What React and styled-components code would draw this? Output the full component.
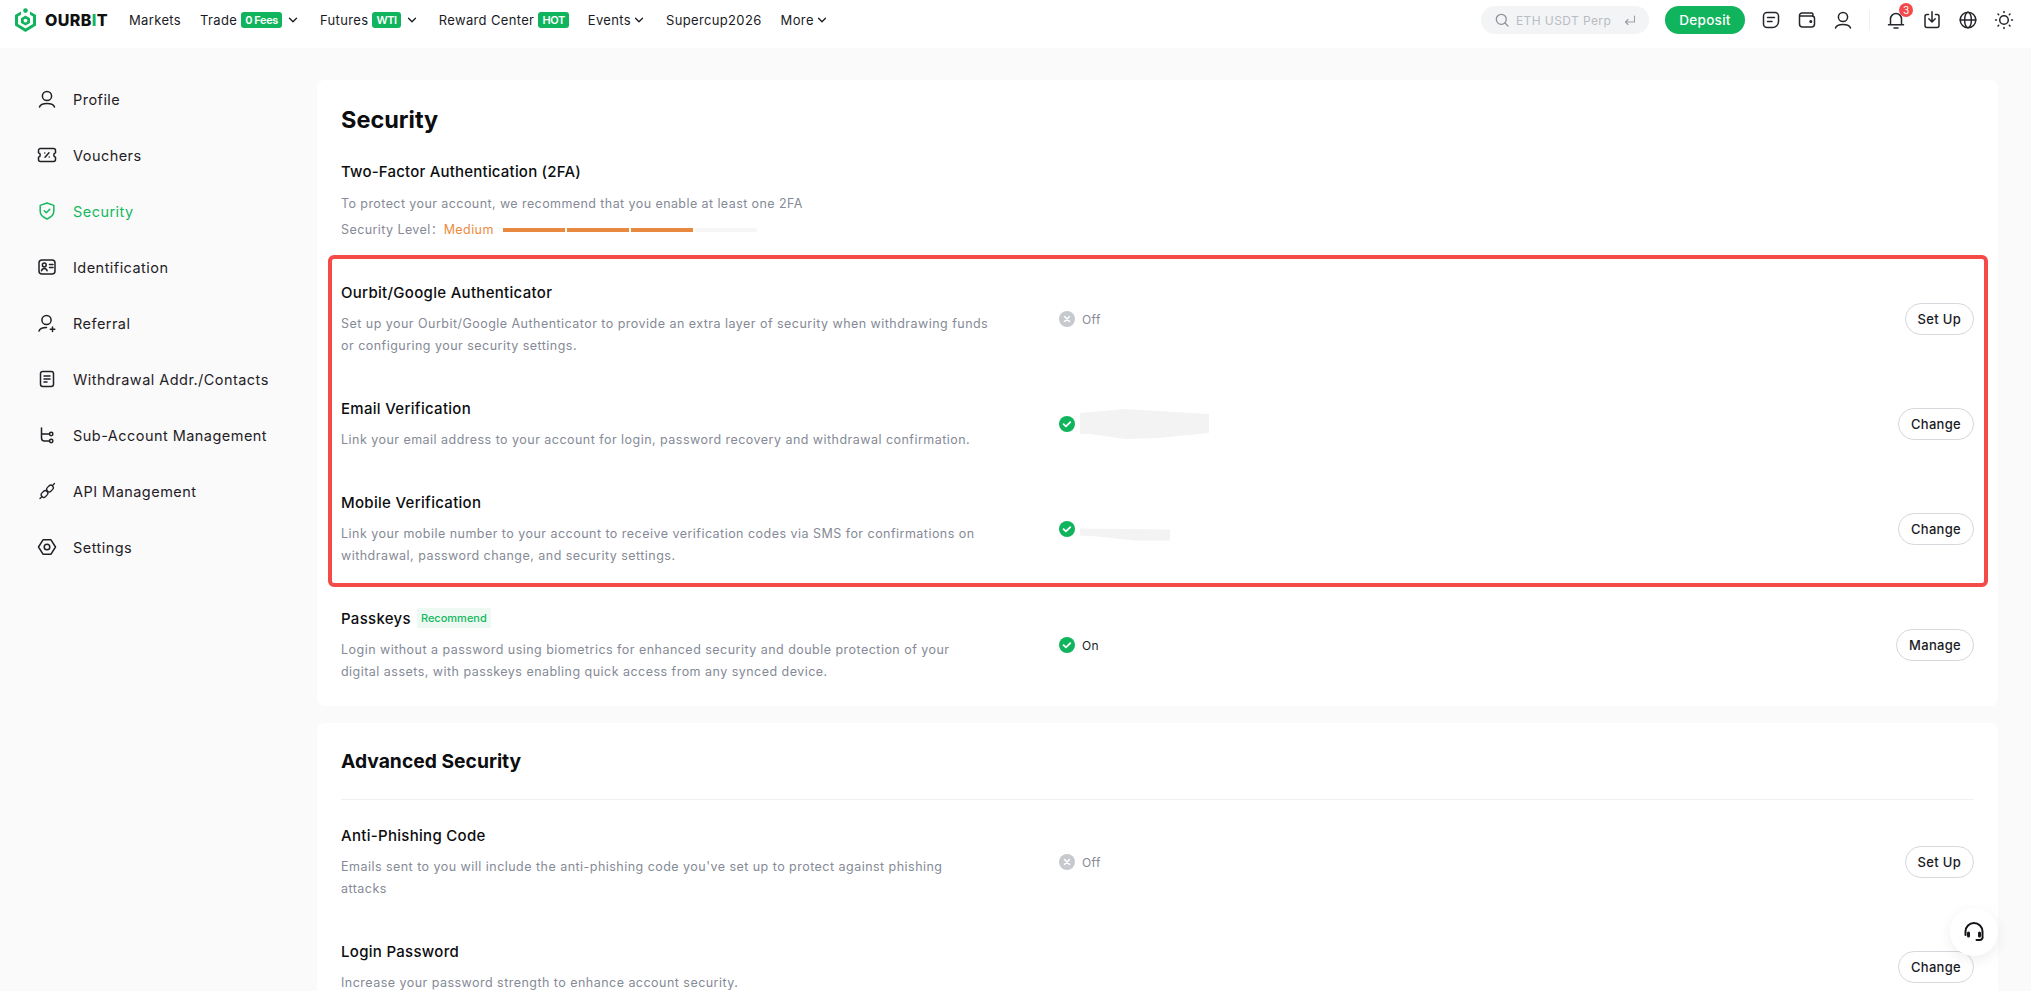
import React from 'react';
import styled, { createGlobalStyle } from 'styled-components';

const FONT = 'Inter, "Noto Sans CJK SC", "Liberation Sans", sans-serif';

const Global = createGlobalStyle`
  html, body { margin: 0; padding: 0; height: 100%; overflow: hidden; background: #fafafa; }
  body { font-family: ${FONT}; color: #1a1b1f; -webkit-font-smoothing: antialiased; }
  * { box-sizing: border-box; }
`;

const GREEN = '#10b45c';

const Page = styled.div`height: 991px; overflow: hidden; display: flex; flex-direction: column;`;
const Header = styled.header`height: 48px; flex: none; background: #fff; display: flex; align-items: center; padding: 0 9px 8px 15px;`;
const Logo = styled.div`display: flex; align-items: center; gap: 9px; width: 114px; flex: none;`;
const LogoWord = styled.span`font-size: 16px; font-weight: 800; letter-spacing: 0.4px; color: #111; em { font-style: normal; color: ${GREEN}; }`;
const Nav = styled.nav`display: flex; align-items: center; gap: 19px; font-size: 13px; letter-spacing: 0.35px; color: #1a1b1f;`;
const NavItem = styled.a`display: flex; align-items: center; white-space: nowrap;`;
const Tag = styled.span`height: 16px; margin-left: 4px; padding: 0 4px; border-radius: 3px; background: ${GREEN}; color: #fff; font-size: 11px; font-weight: 600; line-height: 16px; letter-spacing: -0.4px; & + svg { margin-left: 3px; }`;
const Right = styled.div`margin-left: auto; display: flex; align-items: center;`;
const Search = styled.div`width: 168px; height: 28px; border-radius: 14px; background: #f3f4f5; display: flex; align-items: center; padding: 0 13px 0 14px; gap: 7px; color: #b8bcc4; font-size: 12px; letter-spacing: 0.4px; margin-right: 16px; white-space: nowrap; svg:last-child { margin-left: auto; }`;
const Deposit = styled.button`width: 80px; height: 28px; border: 0; border-radius: 14px; background: ${GREEN}; color: #fff; font: 500 13.5px ${FONT}; letter-spacing: 0.3px; margin-right: 8px; padding: 0;`;
const IconSlot = styled.span`width: 36px; height: 20px; display: flex; justify-content: center; align-items: center; position: relative; color: #24262b;`;
const Divider = styled.span`width: 1px; height: 20px; background: #f0f0f0; margin: 0 8px;`;
const Dot = styled.span`position: absolute; top: -7px; left: 21px; width: 14px; height: 14px; border-radius: 50%; background: #f4484a; color: #fff; font-size: 10px; line-height: 14px; text-align: center;`;

const Body = styled.div`flex: 1; display: flex; min-height: 0;`;
const Sidebar = styled.aside`width: 317px; flex: none; padding: 23px 0 0 37px;`;
const SideItem = styled.a`height: 56px; display: flex; align-items: center; gap: 16px; font-size: 14.5px; letter-spacing: 0.46px; color: ${p => (p.$active ? '#14b85f' : '#1f2126')};`;
const Main = styled.main`flex: 1; padding: 32px 33px 0 0; display: flex; flex-direction: column; gap: 17px;`;
const Card = styled.section`background: #fff; border-radius: 8px; padding: 24px 24px 23px; flex: none;`;
const Title = styled.h1`margin: 1px 0 -1px; font-size: 23.5px; line-height: 30px; font-weight: 700; color: #0c0d0f;`;
const SectionTitle = styled.h2`margin: -1px 0 24px; padding-bottom: 23px; border-bottom: 1px solid #f1f1f1; font-size: 19.3px; line-height: 30px; font-weight: 700; color: #0c0d0f;`;
const SubTitle = styled.h2`margin: 27px 0 11px; font-size: 15px; line-height: 22px; font-weight: 500; letter-spacing: 0.2px; color: #0c0d0f;`;
const Hint = styled.div`font-size: 12.5px; line-height: 20px; color: #858a96; letter-spacing: 0.42px;`;
const Level = styled(Hint)`margin-top: 6px; display: flex; align-items: center;`;
const Medium = styled.span`color: #ee8a3f; margin-right: 9px;`;
const Bars = styled.div`display: flex; gap: 2px;`;
const Bar = styled.i`width: 62px; height: 4px; background: ${p => (p.$on ? '#e8893f' : '#f6f6f6')};`;
const Highlight = styled.div`margin: 15px -14px 20px -13px; padding: 22px 10px 16px 9px; border: 4px solid #f44a48; border-radius: 6px; display: flex; flex-direction: column; gap: 40px;`;
const Rows = styled.div`display: flex; flex-direction: column; gap: 40px;`;
const Row = styled.div`display: grid; grid-template-columns: 718px 1fr auto; align-items: center;`;
const RowTitle = styled.div`display: flex; align-items: center; gap: 6px; height: 22px; margin-bottom: 10px; font-size: 15px; font-weight: 500; letter-spacing: 0.3px; color: #0c0d0f;`;
const Desc = styled.div`font-size: 12.5px; line-height: 22px; color: #858a96; letter-spacing: 0.47px; max-width: 648px;`;
const Recommend = styled.span`height: 20px; line-height: 20px; padding: 0 4px; background: #edf9f2; color: #14b85f; font-size: 11px; font-weight: 500; letter-spacing: 0; border-radius: 2px;`;
const Status = styled.div`display: flex; align-items: center; gap: 7px; font-size: 12px; letter-spacing: 0.4px; color: ${p => (p.$on ? '#1a1b1f' : '#858a96')};`;
const Patch = styled.span`width: ${p => p.$w}px; height: ${p => p.$h}px; background: #f3f3f3; margin-left: -2px; clip-path: ${p => p.$clip};`;
const Btn = styled.button`height: 32px; padding: 0 12px; border: 1px solid #d5d8dc; border-radius: 16px; background: #fff; color: #1a1b1f; font: 500 13px ${FONT}; letter-spacing: 0.3px; white-space: nowrap;`;
const Float = styled.button`position: fixed; left: 1950px; top: 908px; width: 48px; height: 48px; border: 0; padding: 0; border-radius: 50%; background: #fff; box-shadow: 0 4px 14px rgba(0,0,0,.07); display: flex; align-items: center; justify-content: center; color: #15161a;`;

const S = ({ size = 20, w = 1.5, children }) => (
  <svg width={size} height={size} viewBox="0 0 20 20" fill="none" stroke="currentColor" strokeWidth={w} strokeLinecap="round" strokeLinejoin="round">{children}</svg>
);
const Chevron = () => (<svg width="16" height="10" viewBox="0 0 16 10" fill="none" stroke="#1a1b1f" strokeWidth="1.3" strokeLinecap="round" strokeLinejoin="round"><path d="M4.500 3.200 8 6.800l3.500-3.600" /></svg>);

const LogoMark = () => (
  <svg width="21" height="24" viewBox="0 0 21 24">
    <path d="M6 3.600 0 7v10.400L10.500 24 21 17.400V7l-6-3.400v3.200l3 1.800v7.400l-7.500 4.600L3 16V8.600l3-1.800z" fill={GREEN} />
    <path d="M10.500 7.600 15 10.200v4.800l-4.500 2.600L6 15v-4.800z" fill={GREEN} />
    <circle cx="10.500" cy="2.600" r="2.300" fill={GREEN} />
    <circle cx="10.500" cy="12.600" r="1.900" fill="#fff" />
  </svg>
);

const icons = {
  user: <S><circle cx="10" cy="7" r="4.600" /><path d="M2.500 18c.8-2.600 3.400-3.600 7.500-3.600s6.700 1 7.500 3.600" /></S>,
  voucher: <S><path d="M3.500 3.500h13a2 2 0 0 1 2 2v2.200a2.400 2.400 0 0 0 0 4.600v2.200a2 2 0 0 1-2 2h-13a2 2 0 0 1-2-2v-2.200a2.400 2.400 0 0 0 0-4.600V5.500a2 2 0 0 1 2-2z" /><path d="m12 7.800-4 4.400" /><path d="M7.800 8h.01M12.200 12h.01" /></S>,
  shield: <S><path d="M10 2 3.200 4.400v6.200c0 3.400 3 5.800 6.800 7.400 3.800-1.600 6.800-4 6.800-7.400V4.400z" /><path d="m7.200 9.800 2.100 2 3.500-3.600" /></S>,
  id: <S><rect x="2" y="3" width="16" height="14" rx="3" /><circle cx="7.300" cy="8" r="1.900" /><path d="M4.500 13.800c.4-1.500 1.400-2.200 2.800-2.200s2.400.7 2.800 2.200M12.500 7.500H16M12.500 10.500H16" /></S>,
  referral: <S><circle cx="9.500" cy="7" r="4.600" /><path d="M2 18c.8-2.600 3.300-3.600 7.500-3.600M15.500 14v4.500M13.300 16.300h4.500" /></S>,
  doc: <S><rect x="3.500" y="2.500" width="13" height="15" rx="2.200" /><path d="M7 7h6M7 10h6M7 13h3" /></S>,
  sub: <S><path d="M4.500 3v10a3 3 0 0 0 3 3h5M4.500 9h8" /><circle cx="14.200" cy="9" r="1.700" /><circle cx="14.200" cy="16" r="1.700" /></S>,
  api: <S w={1.3}><path d="m3 17.500 1.800-1.800M15.500 4.500l2-2" /><rect x="4" y="10.500" width="7" height="5" rx="2.200" transform="rotate(-45 7.500 13)" /><rect x="9.500" y="5" width="7" height="5" rx="2.200" transform="rotate(-45 13 7.500)" /></S>,
  settings: <S><path d="M6 2.800h8L18.500 10 14 17.200H6L1.500 10z" /><circle cx="10" cy="10" r="2.800" /></S>,
  note: <S><path d="M6 2.500h8a3.500 3.500 0 0 1 3.500 3.500v5.500a6 6 0 0 1-6 6H6A3.500 3.500 0 0 1 2.500 14V6A3.500 3.500 0 0 1 6 2.500z" /><path d="M6.500 7.500h7M6.500 11.500h4.500" /></S>,
  wallet: <S><path d="M16 6V4.500a1.500 1.500 0 0 0-1.500-1.500H5a2.500 2.500 0 0 0-2.500 2.500V14A3 3 0 0 0 5.500 17h9a3 3 0 0 0 3-3V8.500A2.500 2.500 0 0 0 15 6H3" /><circle cx="13.800" cy="11.500" r=".8" fill="currentColor" /></S>,
  bell: <S><path d="M4.500 14.500V9a5.500 5.500 0 0 1 11 0v5.500M2.500 14.800h15M8 18h4" /></S>,
  download: <S><path d="M6.500 4.500H5A2 2 0 0 0 3 6.500V15.500a2 2 0 0 0 2 2h10a2 2 0 0 0 2-2V6.500a2 2 0 0 0-2-2h-1.500M10 1.800v9.500M6.800 8.800 10 12l3.200-3.200" /></S>,
  globe: <S><circle cx="10" cy="10" r="7.800" /><ellipse cx="10" cy="10" rx="3.400" ry="7.800" /><path d="M2.200 10h15.600" /></S>,
  sun: <S><circle cx="10" cy="10" r="4.300" /><path d="M10 1.500v1M10 17.500v1M1.500 10h1M17.500 10h1M4 4l.7.7M15.300 15.300l.7.7M4 16l.7-.7M15.300 4.700l.7-.7" /></S>,
};

const StatusOn = () => (<svg width="16" height="16" viewBox="0 0 16 16"><circle cx="8" cy="8" r="8" fill={GREEN} /><path d="m4.600 8.200 2.300 2.200 4.400-4.300" fill="none" stroke="#fff" strokeWidth="1.800" strokeLinecap="round" strokeLinejoin="round" /></svg>);
const StatusOff = () => (<svg width="16" height="16" viewBox="0 0 16 16"><circle cx="8" cy="8" r="8" fill="#c6c9ce" /><path d="m5.500 5.500 5 5m0-5-5 5" fill="none" stroke="#fff" strokeWidth="1.500" strokeLinecap="round" /></svg>);

const side = [
  ['user', 'Profile'], ['voucher', 'Vouchers'], ['shield', 'Security', true], ['id', 'Identification'], ['referral', 'Referral'],
  ['doc', 'Withdrawal Addr./Contacts'], ['sub', 'Sub-Account Management'], ['api', 'API Management'], ['settings', 'Settings'],
];

const SecurityRow = ({ title, tag, desc, status, btn }) => (
  <Row>
    <div>
      <RowTitle>{title}{tag && <Recommend>{tag}</Recommend>}</RowTitle>
      <Desc>{desc}</Desc>
    </div>
    <div>{status}</div>
    <Btn>{btn}</Btn>
  </Row>
);

const Off = <Status><StatusOff />Off</Status>;
const On = <Status $on><StatusOn />On</Status>;
const EmailMask = <Status><StatusOn /><Patch $w={129} $h={30} $clip="polygon(0 4px, 35% 0, 60% 2px, 100% 5px, 100% 24px, 60% 29px, 35% 30px, 8% 25px, 0 25px)" /></Status>;
const PhoneMask = <Status><StatusOn /><Patch $w={90} $h={23} $clip="polygon(0 11px, 100% 12px, 100% 23px, 60% 23px, 20% 19px, 0 18px)" /></Status>;

export default function App() {
  return (
    <Page>
      <Global />
      <Header>
        <Logo><LogoMark /><LogoWord>OURB<em>I</em>T</LogoWord></Logo>
        <Nav>
          <NavItem>Markets</NavItem>
          <NavItem>Trade<Tag>0 Fees</Tag><Chevron /></NavItem>
          <NavItem>Futures<Tag>WTI</Tag><Chevron /></NavItem>
          <NavItem>Reward Center<Tag>HOT</Tag></NavItem>
          <NavItem>Events<Chevron /></NavItem>
          <NavItem>Supercup2026</NavItem>
          <NavItem>More<Chevron /></NavItem>
        </Nav>
        <Right>
          <Search>
            <svg width="14" height="14" viewBox="0 0 14 14" fill="none" stroke="#8d9199" strokeWidth="1.300" strokeLinecap="round"><circle cx="6.300" cy="6.300" r="5" /><path d="m10 10 3 3" /></svg>
            ETH USDT Perp
            <svg width="12" height="12" viewBox="0 0 12 12" fill="none" stroke="#9a9ea6" strokeWidth="1.100" strokeLinecap="round" strokeLinejoin="round"><path d="M10.500 2v6H1.500M4 5.500 1.500 8 4 10.500" /></svg>
          </Search>
          <Deposit>Deposit</Deposit>
          <IconSlot>{icons.note}</IconSlot>
          <IconSlot>{icons.wallet}</IconSlot>
          <IconSlot>{icons.user}</IconSlot>
          <Divider />
          <IconSlot>{icons.bell}<Dot>3</Dot></IconSlot>
          <IconSlot>{icons.download}</IconSlot>
          <IconSlot>{icons.globe}</IconSlot>
          <IconSlot>{icons.sun}</IconSlot>
        </Right>
      </Header>
      <Body>
        <Sidebar>
          {side.map(([k, t, a]) => <SideItem key={t} $active={a}>{icons[k]}{t}</SideItem>)}
        </Sidebar>
        <Main>
          <Card>
            <Title>Security</Title>
            <SubTitle>Two-Factor Authentication (2FA)</SubTitle>
            <Hint>To protect your account, we recommend that you enable at least one 2FA</Hint>
            <Level>Security Level：<Medium>Medium</Medium><Bars><Bar $on /><Bar $on /><Bar $on /><Bar /></Bars></Level>
            <Highlight>
              <SecurityRow title="Ourbit/Google Authenticator" desc="Set up your Ourbit/Google Authenticator to provide an extra layer of security when withdrawing funds or configuring your security settings." status={Off} btn="Set Up" />
              <SecurityRow title="Email Verification" desc="Link your email address to your account for login, password recovery and withdrawal confirmation." status={EmailMask} btn="Change" />
              <SecurityRow title="Mobile Verification" desc="Link your mobile number to your account to receive verification codes via SMS for confirmations on withdrawal, password change, and security settings." status={PhoneMask} btn="Change" />
            </Highlight>
            <SecurityRow title="Passkeys" tag="Recommend" desc="Login without a password using biometrics for enhanced security and double protection of your digital assets, with passkeys enabling quick access from any synced device." status={On} btn="Manage" />
          </Card>
          <Card>
            <SectionTitle>Advanced Security</SectionTitle>
            <Rows>
              <SecurityRow title="Anti-Phishing Code" desc="Emails sent to you will include the anti-phishing code you've set up to protect against phishing attacks" status={Off} btn="Set Up" />
              <SecurityRow title="Login Password" desc="Increase your password strength to enhance account security." status={<span />} btn="Change" />
            </Rows>
          </Card>
        </Main>
      </Body>
      <Float>
        <svg width="22" height="22" viewBox="0 0 22 22" fill="none" stroke="currentColor" strokeWidth="2" strokeLinecap="round"><path d="M2.500 14V10.500a8.500 8.500 0 0 1 17 0V14" /><path d="M5.500 12v3M16.500 12v3" strokeWidth="3" /><path d="M19.500 15a3 3 0 0 1-3 4h-3" /></svg>
      </Float>
    </Page>
  );
}
